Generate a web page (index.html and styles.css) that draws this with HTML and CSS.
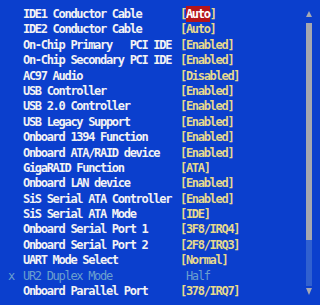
FILE: index.html
```html
<!DOCTYPE html>
<html>
<head>
<meta charset="utf-8">
<link rel="stylesheet" href="styles.css">
</head>
<body>
<div class="screen">
  <div class="menu">
    <div class="row"><span class="mark"></span><span class="label">IDE1 Conductor Cable</span><span class="value">[<span class="sel">Auto</span>]</span></div>
    <div class="row"><span class="mark"></span><span class="label">IDE2 Conductor Cable</span><span class="value">[Auto]</span></div>
    <div class="row"><span class="mark"></span><span class="label">On-Chip Primary   PCI IDE</span><span class="value">[Enabled]</span></div>
    <div class="row"><span class="mark"></span><span class="label">On-Chip Secondary PCI IDE</span><span class="value">[Enabled]</span></div>
    <div class="row"><span class="mark"></span><span class="label">AC97 Audio</span><span class="value">[Disabled]</span></div>
    <div class="row"><span class="mark"></span><span class="label">USB Controller</span><span class="value">[Enabled]</span></div>
    <div class="row"><span class="mark"></span><span class="label">USB 2.0 Controller</span><span class="value">[Enabled]</span></div>
    <div class="row"><span class="mark"></span><span class="label">USB Legacy Support</span><span class="value">[Enabled]</span></div>
    <div class="row"><span class="mark"></span><span class="label">Onboard 1394 Function</span><span class="value">[Enabled]</span></div>
    <div class="row"><span class="mark"></span><span class="label">Onboard ATA/RAID device</span><span class="value">[Enabled]</span></div>
    <div class="row"><span class="mark"></span><span class="label">GigaRAID Function</span><span class="value">[ATA]</span></div>
    <div class="row"><span class="mark"></span><span class="label">Onboard LAN device</span><span class="value">[Enabled]</span></div>
    <div class="row"><span class="mark"></span><span class="label">SiS Serial ATA Controller</span><span class="value">[Enabled]</span></div>
    <div class="row"><span class="mark"></span><span class="label">SiS Serial ATA Mode</span><span class="value">[IDE]</span></div>
    <div class="row"><span class="mark"></span><span class="label">Onboard Serial Port 1</span><span class="value">[3F8/IRQ4]</span></div>
    <div class="row"><span class="mark"></span><span class="label">Onboard Serial Port 2</span><span class="value">[2F8/IRQ3]</span></div>
    <div class="row"><span class="mark"></span><span class="label">UART Mode Select</span><span class="value">[Normal]</span></div>
    <div class="row disabled"><span class="mark">x</span><span class="label">UR2 Duplex Mode</span><span class="value"> Half</span></div>
    <div class="row"><span class="mark"></span><span class="label">Onboard Parallel Port</span><span class="value">[378/IRQ7]</span></div>
  </div>
  <div class="scroll">
    <div class="arrow up"></div>
    <div class="thumb"></div>
    <div class="track"></div>
    <div class="arrow down"></div>
  </div>
</div>
</body>
</html>
```

FILE: styles.css
```css
html, body {
  margin: 0;
  padding: 0;
  background: #0b3fcd;
}
.screen {
  width: 320px;
  height: 305px;
  display: flex;
  box-sizing: border-box;
  padding: 7px 8px 0 8px;
  font-family: "DejaVu Sans Mono", "Liberation Mono", monospace;
  font-weight: bold;
  font-size: 12px;
  letter-spacing: -1.3px;
}
.menu {
  flex: 1;
  display: flex;
  flex-direction: column;
}
.row {
  display: grid;
  grid-template-columns: 15px 157px 1fr;
  height: 15.4px;
  line-height: 15.4px;
  white-space: pre;
}
.mark { color: #6a9fcf; font-weight: normal; }
.label { color: #f2f2f4; }
.value { color: #e6d98e; }
.sel {
  background: #b4161a;
  color: #ffffff;
  padding: 1px 0;
}
.disabled .label, .disabled .value {
  color: #6a9fcf;
  font-weight: normal;
}
.scroll {
  width: 6px;
  display: flex;
  flex-direction: column;
  align-items: center;
  padding-top: 4px;
}
.arrow {
  width: 0;
  height: 0;
  border-left: 3px solid transparent;
  border-right: 3px solid transparent;
}
.up {
  border-bottom: 6px solid #a7a9b2;
}
.thumb {
  margin-top: 6px;
  width: 6px;
  height: 217px;
  background: #a5a7b0;
}
.track {
  width: 6px;
  height: 46px;
  background: #3060d0;
}
.down {
  margin-top: 2px;
  border-top: 7px solid #a7a9b2;
}
```
